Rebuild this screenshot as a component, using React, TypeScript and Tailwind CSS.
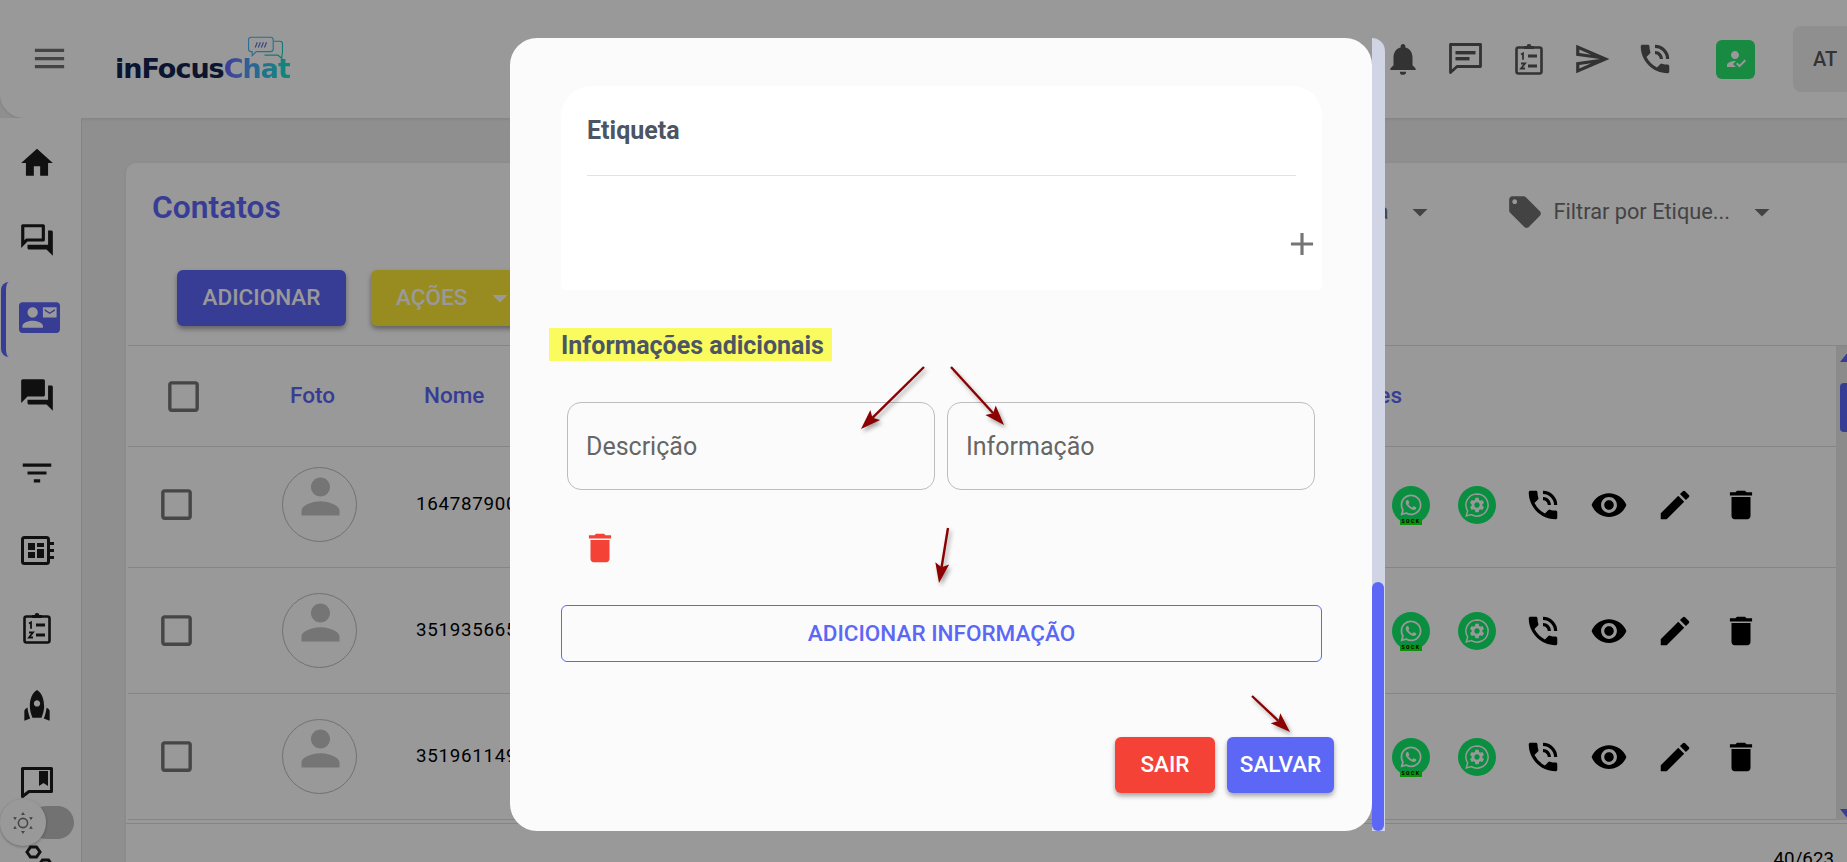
import React from "react";
import {
  MdHome, MdOutlineQuestionAnswer, MdContactMail, MdForum, MdFilterList, MdRocket, MdNotifications,
  MdOutlineSend, MdPhoneInTalk, MdHowToReg, MdLocalOffer, MdArrowDropDown, MdCheckBoxOutlineBlank,
  MdPerson, MdVisibility, MdEdit, MdDelete, MdAdd, MdMenu, MdSettings,
} from "react-icons/md";
import { FaWhatsapp } from "react-icons/fa";

function ListClipboard({ className }: { className?: string }) {
  return (
    <svg viewBox="0 0 28 32" className={className} fill="none" stroke="currentColor">
      <rect x="1.5" y="4.5" width="25" height="26" rx="2" strokeWidth="2.6" />
      <circle cx="14" cy="3.5" r="2.4" fill="currentColor" stroke="none" />
      <rect x="9" y="3" width="10" height="3" fill="currentColor" stroke="none" />
      <path d="M6 11.5l2-1.2v6.5" strokeWidth="1.8" />
      <path d="M6 20.5h4l-4 5h4" strokeWidth="1.8" />
      <path d="M13 13h9M13 23h9" strokeWidth="2.8" />
    </svg>
  );
}

function Notebook({ className }: { className?: string }) {
  return (
    <svg viewBox="0 0 33 29" className={className} fill="currentColor">
      <rect x="1.5" y="1.5" width="26" height="26" rx="2" fill="none" stroke="currentColor" strokeWidth="3" />
      <rect x="7" y="7" width="7" height="7" />
      <rect x="7" y="16" width="7" height="6" />
      <rect x="16" y="7" width="7" height="4" />
      <rect x="16" y="13" width="7" height="9" />
      <rect x="29" y="6" width="4" height="3" />
      <rect x="29" y="13" width="4" height="3" />
      <rect x="29" y="20" width="4" height="3" />
    </svg>
  );
}

function BookmarkChat({ className }: { className?: string }) {
  return (
    <svg viewBox="0 0 32 31" className={className} fill="currentColor">
      <path d="M1.5 1.5h29v23H8l-6.5 5z" fill="none" stroke="currentColor" strokeWidth="3" strokeLinejoin="round" />
      <path d="M18 4h9v15l-4.5-3-4.5 3z" />
    </svg>
  );
}

function MessageBars({ className }: { className?: string }) {
  return (
    <svg viewBox="0 0 33 31" className={className} fill="currentColor">
      <path d="M1.5 1.5h30v22H8l-6.5 6z" fill="none" stroke="currentColor" strokeWidth="2.8" strokeLinejoin="round" />
      <rect x="6.5" y="8" width="20" height="3.4" />
      <rect x="6.5" y="14" width="14" height="3.4" />
    </svg>
  );
}

function SunIcon({ className }: { className?: string }) {
  return (
    <svg viewBox="0 0 24 24" className={className} fill="currentColor">
      <circle cx="12" cy="12" r="4.6" fill="none" stroke="currentColor" strokeWidth="1.6" />
      <path d="M12 1l2 3h-4zM12 23l-2-3h4zM2.2 6l3.6.2-1.8 3zM21.8 6l-1.8 3.2-1.8-3zM2.2 18l1.8-3.2 1.8 3zM21.8 18l-3.6-.2 1.8-3z" />
    </svg>
  );
}

function Gears({ className }: { className?: string }) {
  return (
    <svg viewBox="0 0 30 30" className={className} fill="none" stroke="currentColor" strokeWidth="3">
      <path d="M4 7l3.5-5h6l3.5 5-3.5 5h-6z" />
      <path d="M16 20l3.5-5h6l3.5 5-3.5 5h-6z" />
    </svg>
  );
}

function Arrow({ x1, y1, x2, y2 }: { x1: number; y1: number; x2: number; y2: number }) {
  const dx = x2 - x1;
  const dy = y2 - y1;
  const len = Math.hypot(dx, dy);
  const ux = dx / len;
  const uy = dy / len;
  const bx = x2 - ux * 20;
  const by = y2 - uy * 20;
  const nx = bx + ux * 4;
  const ny = by + uy * 4;
  const head = `${x2},${y2} ${bx - uy * 7},${by + ux * 7} ${nx},${ny} ${bx + uy * 7},${by - ux * 7}`;
  return (
    <g>
      <line x1={x1} y1={y1} x2={nx} y2={ny} stroke="#8b0000" strokeWidth="2.4" />
      <polygon points={head} fill="#8b0000" />
    </g>
  );
}

function WhatsBadge() {
  return (
    <div className="relative flex h-[38px] w-[38px] items-center justify-center rounded-full bg-[#0fee6a] text-white">
      <FaWhatsapp className="h-[24px] w-[24px]" />
      <span className="absolute bottom-[-1px] left-[8px] flex h-[6px] w-[22px] items-center justify-center bg-[#12f512] text-[5px] font-bold leading-none tracking-[1.5px] text-black">
        SOCK
      </span>
    </div>
  );
}

function GearBadge() {
  return (
    <div className="relative flex h-[38px] w-[38px] items-center justify-center rounded-full bg-[#0fee6a] text-white">
      <svg viewBox="0 0 24 24" className="h-[28px] w-[28px]" fill="none" stroke="currentColor" strokeWidth="1.3">
        <path d="M12 2.5a9.5 9.5 0 1 1-4.8 17.7L2.8 21.4l1.2-4.3A9.5 9.5 0 0 1 12 2.5z" />
      </svg>
      <MdSettings className="absolute h-[18px] w-[18px]" />
    </div>
  );
}

function Row({ phone, first }: { phone: string; first?: boolean }) {
  return (
    <div className={first ? "flex h-[121px] items-center border-b border-[#dedede] pb-[5px]" : "flex h-[126px] items-center border-b border-[#dedede]"}>
      <div className="w-[154px] shrink-0 pl-[28px]">
        <MdCheckBoxOutlineBlank className="h-[41px] w-[41px] text-[#767676]" />
      </div>
      <div className="flex h-[75px] w-[75px] shrink-0 items-center justify-center rounded-full border border-[#bdbdbd] pl-[2px]">
        <MdPerson className="mb-[16px] h-[57px] w-[57px] text-[#c4c4c4]" />
      </div>
      <div className="ml-[59px] flex-1 text-[18.75px] tracking-[0.7px] text-black">{phone}</div>
      <div className="mr-[62px] flex text-black">
        <div className="flex w-[66px] justify-center"><WhatsBadge /></div>
        <div className="flex w-[66px] justify-center"><GearBadge /></div>
        <div className="flex w-[66px] justify-center"><MdPhoneInTalk className="h-[38px] w-[38px]" /></div>
        <div className="flex w-[66px] justify-center"><MdVisibility className="h-[38px] w-[38px]" /></div>
        <div className="flex w-[66px] justify-center"><MdEdit className="h-[38px] w-[38px]" /></div>
        <div className="flex w-[66px] justify-center"><MdDelete className="h-[38px] w-[38px]" /></div>
      </div>
    </div>
  );
}

export default function App() {
  return (
    <div className="relative h-[862px] w-[1847px] overflow-hidden bg-[#eeeeee] font-['Roboto',sans-serif]">
      {/* Page under the dialog */}
      <header className="relative flex h-[118px] items-center rounded-bl-[24px] bg-white shadow-[0_1px_3px_rgba(0,0,0,0.1)]">
        <MdMenu className="mb-[2px] ml-[30px] h-[39px] w-[39px] shrink-0 text-[#727272]" />
        <div className="relative mb-[2px] ml-[46px] h-[70px] w-[180px]">
          <svg viewBox="0 0 36 24" className="absolute left-[132px] top-[13px] h-[25px] w-[37px]" fill="none" strokeWidth="1.1">
            <path d="M4 1h19a2.5 2.5 0 0 1 2.5 2.5v9a2.5 2.5 0 0 1-2.5 2.5H9l-4 4v-4H4a2.5 2.5 0 0 1-2.5-2.5v-9A2.5 2.5 0 0 1 4 1z" stroke="#4db4f0" />
            <path d="M26 5h6a2.5 2.5 0 0 1 2.5 2.5v9l-.5 2v3l-4-3H17" stroke="#20cdbb" />
            <path d="M8 11l2-5M11 11l2-5M14 11l2-5M17 11l2-5" stroke="#5a70d0" />
          </svg>
          <span className="absolute bottom-[11px] left-0 whitespace-nowrap font-['DejaVu_Sans',sans-serif] text-[27px] font-bold leading-none tracking-[-1px] text-[#14234f]">
            inFocus
            <span className="bg-gradient-to-r from-[#6a62ff] via-[#3fb2f5] to-[#12e6c4] bg-clip-text text-transparent">Chat</span>
          </span>
        </div>
        <div className="ml-auto flex items-center">
          <div className="mb-[1px] flex text-[#555555]">
            <div className="flex w-[63px] justify-center"><MdNotifications className="h-[38px] w-[38px]" /></div>
            <div className="flex w-[63px] items-center justify-center"><MessageBars className="h-[31px] w-[33px]" /></div>
            <div className="flex w-[63px] items-center justify-center"><ListClipboard className="h-[32px] w-[28px]" /></div>
            <div className="flex w-[63px] justify-center"><MdOutlineSend className="h-[38px] w-[38px]" /></div>
            <div className="flex w-[63px] justify-center"><MdPhoneInTalk className="h-[38px] w-[38px]" /></div>
          </div>
          <div className="ml-[30px] flex h-[39px] w-[39px] items-center justify-center rounded-[6px] bg-[#28e66f] text-white">
            <MdHowToReg className="h-[24px] w-[24px]" />
          </div>
          <div className="ml-[38px] flex h-[66px] w-[54px] items-center rounded-l-[8px] bg-[#eeeeee] pl-[20px] text-[20px] font-medium text-[#555555]">
            AT
          </div>
        </div>
      </header>

      <div className="flex h-[744px]">
        <aside className="relative w-[82px] shrink-0 overflow-hidden border-r border-[#dcdcdc] bg-white pt-[6px] text-[#1c1c1c]">
          <div className="flex h-[77.5px] items-center pl-[18px]"><MdHome className="h-[38px] w-[38px]" /></div>
          <div className="flex h-[77.5px] items-center pl-[18px]"><MdOutlineQuestionAnswer className="h-[38px] w-[38px]" /></div>
          <div className="flex h-[77.5px] items-center pl-[19px]"><MdContactMail className="h-[41px] w-[41px] text-[#5d66f7]" /></div>
          <div className="flex h-[77.5px] items-center pl-[18px]"><MdForum className="h-[38px] w-[38px]" /></div>
          <div className="flex h-[77.5px] items-center pl-[18px]"><MdFilterList className="h-[38px] w-[38px]" /></div>
          <div className="flex h-[77.5px] items-center pl-[21px]"><Notebook className="h-[29px] w-[33px]" /></div>
          <div className="flex h-[77.5px] items-center pl-[23px]"><ListClipboard className="h-[32px] w-[28px]" /></div>
          <div className="flex h-[77.5px] items-center pl-[18px]"><MdRocket className="h-[38px] w-[38px]" /></div>
          <div className="flex h-[77.5px] items-center pl-[21px]"><BookmarkChat className="h-[31px] w-[32px]" /></div>
          <div className="flex h-[77.5px] items-center pl-[23px]"><Gears className="h-[30px] w-[30px]" /></div>
          <div className="absolute left-[1px] top-[164px] h-[75px] w-[8px] rounded-l-[8px] border-l-[5px] border-[#5d66f7]" />
        </aside>

        <main className="min-w-0 flex-1 pl-[44px] pt-[45px]">
          <div className="h-[740px] w-[1721px] rounded-tl-[10px] bg-white shadow-[0_1px_4px_rgba(0,0,0,0.06)]">
            <div className="flex h-[107px] items-start justify-between">
              <h1 className="ml-[26px] mt-[27px] text-[31.75px] font-semibold leading-[36px] text-[#5d66f7]">Contatos</h1>
              <div className="mr-[67px] mt-[30px] flex items-center text-[21.75px] text-[#717171]">
                <span>Filtrar por Empresa</span>
                <MdArrowDropDown className="ml-[13px] h-[36px] w-[36px]" />
                <MdLocalOffer className="ml-[68px] h-[38px] w-[38px]" />
                <span className="ml-[10px] whitespace-nowrap">Filtrar por Etique...</span>
                <MdArrowDropDown className="ml-[14px] h-[36px] w-[36px]" />
              </div>
            </div>
            <div className="flex h-[75px] gap-[25px] pl-[51px]">
              <button className="h-[56px] w-[169px] rounded-[6px] bg-[#5d66f7] text-[22.5px] font-medium text-white shadow-[0_3px_5px_rgba(0,0,0,0.35)]">
                ADICIONAR
              </button>
              <button className="flex h-[56px] w-[170px] items-center rounded-[6px] bg-[#fdea38] pl-[25px] text-[22.5px] font-medium text-white shadow-[0_3px_5px_rgba(0,0,0,0.35)]">
                AÇÕES
                <MdArrowDropDown className="ml-[15px] h-[36px] w-[36px]" />
              </button>
            </div>

            <div className="ml-[2px] flex border-t border-[#dedede]">
              <div className="min-w-0 flex-1">
                <div className="flex h-[101px] items-center border-b border-[#dedede] text-[22.5px] font-medium text-[#5d66f7]">
                  <div className="w-[154px] shrink-0 pl-[35px]">
                    <MdCheckBoxOutlineBlank className="h-[41px] w-[41px] text-[#767676]" />
                  </div>
                  <div className="ml-[8px] w-[134px] shrink-0">Foto</div>
                  <div>Nome</div>
                  <div className="mr-[434px] flex-1 text-right">Conexões</div>
                </div>
                <Row phone="16478790000" first />
                <Row phone="351935665000" />
                <Row phone="351961149000" />
              </div>
              <div className="flex h-[474px] w-[11px] shrink-0 flex-col overflow-hidden bg-[#e8e8e8] pl-[4px]">
                <div className="mt-[6px] h-0 w-0 border-x-[8px] border-b-[10px] border-x-transparent border-b-[#5d66f7]" />
                <div className="mt-[21px] h-[49px] w-[14px] shrink-0 rounded-[4px] bg-[#5d66f7]" />
                <div className="mt-auto mb-[1px] h-0 w-0 border-x-[8px] border-t-[10px] border-x-transparent border-t-[#5d66f7]" />
              </div>
            </div>
            <div className="mt-[3px] border-t border-[#dedede] pr-[13px] pt-[25px] text-right text-[18.75px] leading-[20px] text-black">
              40/623
            </div>
          </div>
        </main>
      </div>

      {/* Theme switch lies over the sidebar */}
      <div className="absolute left-[30px] top-[806px] h-[33px] w-[44px] rounded-full bg-[#bebebe]" />
      <div className="absolute left-0 top-[799px] flex h-[47px] w-[46px] items-center justify-center rounded-full bg-white text-[#767676] shadow-[0_1px_3px_rgba(0,0,0,0.3)]">
        <SunIcon className="h-[24px] w-[24px]" />
      </div>

      {/* Dim layer */}
      <div className="absolute inset-0 bg-black/40" />

      {/* Dialog */}
      <div className="absolute left-[510px] top-[38px] flex h-[793px] w-[875px]">
        <div className="h-full w-[862px] shrink-0 rounded-[27px] bg-[#fbfbfb] pl-[51px] pt-[48px]">
          <section className="relative h-[204px] w-[761px] rounded-t-[30px] rounded-b-[4px] bg-white px-[26px] pt-[31px]">
            <h2 className="border-b border-[#e2e2e2] pb-[30px] text-[25px] font-bold leading-[28px] text-[#4b5563]">Etiqueta</h2>
            <MdAdd className="absolute bottom-[27px] right-[1px] h-[38px] w-[38px] text-[#757575]" />
          </section>

          <h2 className="ml-[-12px] mt-[38px] inline-block h-[33px] bg-[#f9fb5f] pl-[12px] pr-[8px] text-[25px] font-bold leading-[36px] text-[#4b5563]">
            Informações adicionais
          </h2>

          <div className="ml-[6px] mt-[41px] flex gap-[12px]">
            <input
              placeholder="Descrição"
              className="h-[88px] w-[368px] rounded-[14px] border border-[#bdbdbd] bg-transparent pl-[18px] text-[25px] placeholder:text-[#666666]"
            />
            <input
              placeholder="Informação"
              className="h-[88px] w-[368px] rounded-[14px] border border-[#bdbdbd] bg-transparent pl-[18px] text-[25px] placeholder:text-[#666666]"
            />
          </div>

          <MdDelete className="ml-[20px] mt-[39px] h-[38px] w-[38px] text-[#f44336]" />

          <button className="mt-[38px] h-[57px] w-[761px] rounded-[6px] border border-[#5c68f5] text-[22.5px] font-medium text-[#5c68f5]">
            ADICIONAR INFORMAÇÃO
          </button>

          <div className="mt-[75px] flex w-[773px] justify-end gap-[12px]">
            <button className="h-[56px] w-[100px] rounded-[6px] bg-[#f44336] text-[22.5px] font-medium text-white shadow-[0_3px_5px_rgba(0,0,0,0.35)]">
              SAIR
            </button>
            <button className="h-[56px] w-[107px] rounded-[6px] bg-[#5c68f5] text-[22.5px] font-medium text-white shadow-[0_3px_5px_rgba(0,0,0,0.35)]">
              SALVAR
            </button>
          </div>
        </div>
        <div className="flex h-full w-[13px] shrink-0 flex-col justify-end rounded-tr-[20px] bg-[#d0d4e4] pr-[1px]">
          <div className="h-[249px] rounded-full bg-[#5c68f5]" />
        </div>
      </div>

      {/* Annotation arrows drawn on top of the screenshot */}
      <svg className="pointer-events-none absolute inset-0 h-[862px] w-[1847px] drop-shadow-[2px_3px_2px_rgba(0,0,0,0.35)]">
        <Arrow x1={924} y1={367} x2={861} y2={429} />
        <Arrow x1={951} y1={367} x2={1004} y2={425} />
        <Arrow x1={948} y1={528} x2={939} y2={583} />
        <Arrow x1={1252} y1={696} x2={1290} y2={732} />
      </svg>
    </div>
  );
}
